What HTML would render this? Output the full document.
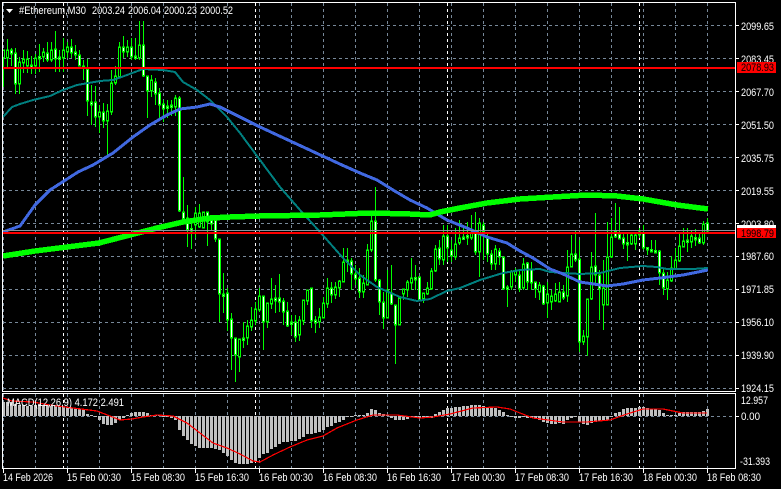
<!DOCTYPE html>
<html>
<head>
<meta charset="utf-8">
<style>
html,body{margin:0;padding:0;background:#000;width:781px;height:489px;overflow:hidden}
svg{display:block;position:absolute;left:0;top:0}
text{font-family:"Liberation Sans",sans-serif;font-size:10.6px;fill:#fff}
</style>
</head>
<body>
<svg width="781" height="489" viewBox="0 0 781 489" xmlns="http://www.w3.org/2000/svg">
<defs>
<path id="w" d="M11 51V53M15 54V83M31 66V66.5M39 57.5V58M47 54V59M55 50V58M59 58V58.5M71 48V52M75 53V54M79 56V65M83 67V67.5M87 70V100M91 103V104M95 103V116M103 113V120M123 48V51M131 48V56M135 57V57.5M143 46V75M147 77V90M155 83V93M159 94V104M163 105V108M167 107V107.5M171 106V106.5M179 99V210M183 213V218M187 219V229M191 229.5V230M207 213V221M211 221V223M215 221V238M219 240V293M223 295V295.5M227 294V319M231 320V337M235 339V354M243 339V339.5M263 297V321M275 299V300M279 299V301M283 302V311M287 312V325M291 323V323.5M295 323V336M311 289V320M315 321V322M331 289V294M347 261V261.5M351 262V273M355 275V278M359 279V291M375 222V279M379 281V301M383 303V317M391 294V303M395 306V324M415 278.5V279M419 278V299M439 249V258M447 237V247M451 251V255M463 238V238.5M467 236.5V237M475 233V251M483 226V231M487 239V253M491 255V263M499 252V256M503 258V288M507 288V288.5M519 276V288M527 264V281M531 270V282M535 283V288M543 287V303M563 293V297M575 255V259M579 260V341M595 267V274M599 276V288M615 232V236M619 235V238M623 239V243M627 243.5V244M639 233V234M643 234V247M647 248.5V249M651 250.5V251M655 251.5V252M659 252V272M663 274V287M687 241V241.5M695 238.5V239M699 239V242M707 224V230"/>
<path id="b" d="M3 51V57M7 51V57M19 63V83M23 60V62M27 60V65M35 59V65M43 53V56M51 51V59M63 51V57M67 48V51M99 113V116M107 112V120M111 84V111M115 77V82M119 48V76M127 48V51M139 46V57M151 81V90M175 99V106M195 214V224M199 214V226M203 213V227M239 340V356M247 327V337M251 321V326M255 310V320M259 297V309M267 304V321M271 300V303M299 321V334M303 301V320M307 291V300M319 318V321M323 304V317M327 289V303M335 288V294M339 282V287M343 263V281M363 284V291M367 251V284M371 222V249M387 291V317M399 299V324M403 290V293M407 283V289M411 279V282M423 294V298M427 289V293M431 272V288M435 250V270M443 237V259M455 245V256M459 239V242M471 234V237M479 224V251M495 250V263M511 272V286M515 272V274M523 265V287M539 286V291M547 295V302M551 297V301M555 295V300M559 293V301M567 268V295M571 255V266M583 337V341M587 300V336M591 268V298M603 289V304M607 258V304M611 238V256M631 236V243M635 236V243M667 281V288M671 269V280M675 261V268M679 247V260M683 242V246M691 237V241M703 225V242"/>
</defs>

<!-- grid -->
<g shape-rendering="crispEdges" fill="none" stroke-width="1">
<path stroke="#778899" stroke-dasharray="3 3" d="M3 25.5H735M3 58.5H735M3 91.5H735M3 124.5H735M3 157.5H735M3 190.5H735M3 223.5H735M3 256.5H735M3 289.5H735M3 322.5H735M3 355.5H735M3 388.5H735M3 416.5H735"/>
<path stroke="#778899" stroke-dasharray="3 3" d="M3.5 3V391M35.5 3V391M67.5 3V391M99.5 3V391M131.5 3V391M163.5 3V391M195.5 3V391M227.5 3V391M259.5 3V391M291.5 3V391M323.5 3V391M355.5 3V391M387.5 3V391M419.5 3V391M451.5 3V391M483.5 3V391M515.5 3V391M547.5 3V391M579.5 3V391M611.5 3V391M643.5 3V391M675.5 3V391M707.5 3V391M3.5 394V468M35.5 394V468M67.5 394V468M99.5 394V468M131.5 394V468M163.5 394V468M195.5 394V468M227.5 394V468M259.5 394V468M291.5 394V468M323.5 394V468M355.5 394V468M387.5 394V468M419.5 394V468M451.5 394V468M483.5 394V468M515.5 394V468M547.5 394V468M579.5 394V468M611.5 394V468M643.5 394V468M675.5 394V468M707.5 394V468"/>
<path stroke="#fff" stroke-dasharray="3 3" d="M63.5 3V391M255.5 3V391M447.5 3V391M639.5 3V391M63.5 394V468M255.5 394V468M447.5 394V468M639.5 394V468"/>
</g>

<!-- candles -->
<g transform="translate(.5,0)" shape-rendering="crispEdges" fill="none">
<path stroke="#00ff00" stroke-width="1" d="M3 50V87M7 39V67M11 48V66M15 48V94M19 57V94M23 50V73M27 51V73M31 56V74M35 54V74M39 44V72M43 48V62M47 42V62M51 42V62M55 31V72M59 50V72M63 38V72M67 42V58M71 39V58M75 45V60M79 50V66M83 60V80M87 59V116M91 85V125M95 86V127M99 105V133M103 103V128M107 104V155M111 70V115M115 66V85M119 42V78M123 36V58M127 40V57M131 38V60M135 38V60M139 21V60M143 21V77M147 76V118M151 75V97M155 78V105M159 88V119M163 100V122M167 100V118M171 100V116M175 95V116M179 96V212M183 177V219M187 205V247M191 220V249M195 207V238M199 204V228M203 212V228M207 212V246M211 218V230M215 215V242M219 239V322M223 273V313M227 288V331M231 313V370M235 338V382M239 339V372M243 322V348M247 320V345M251 307V331M255 302V325M259 288V312M263 296V350M267 303V328M271 278V309M275 285V313M279 274V312M283 298V325M287 302V327M291 315V335M295 315V342M299 316V341M303 300V325M307 290V305M311 288V328M315 316V333M319 308V328M323 297V317M327 278V308M331 282V303M335 282V299M339 280V297M343 248V282M347 248V272M351 258V290M355 265V285M359 268V298M363 275V298M367 244V285M371 215V252M375 187V282M379 279V315M383 292V329M387 270V318M391 265V305M395 305V364M399 298V325M403 290V300M407 280V297M411 258V290M415 265V290M419 276V300M423 293V303M427 282V295M431 268V290M435 245V272M439 240V265M443 225V265M447 225V262M451 240V262M455 228V260M459 220V245M463 225V240M467 222V245M471 215V240M475 212V255M479 218V277M483 222V260M487 232V262M491 250V270M495 245V270M499 248V265M503 257V290M507 285V307M511 270V290M515 268V282M519 270V292M523 258V290M527 262V290M531 262V290M535 282V298M539 282V300M543 285V305M547 282V318M551 290V310M555 283V302M559 282V302M563 285V300M567 250V302M571 235V267M575 230V262M579 240V352M583 330V345M587 299V356M591 252V300M595 213V283M599 270V320M603 260V330M607 222V305M611 218V258M615 203V238M619 207V239M623 232V249M627 232V261M631 232V245M635 232V250M639 228V238M643 225V250M647 248V255M651 240V252M655 240V252M659 250V285M663 268V295M667 272V300M671 256V282M675 248V270M679 232V262M683 228V247M687 228V252M691 231V248M695 229V246M699 233V244M703 221V245M707 218V232"/>
<use href="#w" stroke="#00ff00" stroke-width="3" stroke-linecap="square"/>
<use href="#b" stroke="#00ff00" stroke-width="3" stroke-linecap="square"/>
<use href="#w" stroke="#ffffff" stroke-width="1"/>
<use href="#b" stroke="#000000" stroke-width="1"/>
</g>

<!-- moving averages -->
<g fill="none" stroke-linejoin="round" shape-rendering="crispEdges">
<polyline stroke="#008080" stroke-width="2" points="3,117 12,107 20,104 33,100 50,96 63,90 77,85 100,81 113,80 127,75 143,69 163,70 175,72 183,82 197,90 210,100 227,117 240,133 260,160 280,187 300,210 320,232 343,258 360,275 377,287 400,297 417,301 430,299 447,291 460,288 480,280 503,273 520,270 540,269 550,272 580,274 600,273 620,268 643,266 657,267 667,269 693,269 708,268"/>
<polyline stroke="#4169e1" stroke-width="3" points="3,232 20,226 35,205 50,190 78,172 93,165 113,153 133,137 150,125 167,115 180,109 197,107 210,104 220,107 240,117 260,127 342,165 360,173 377,180 393,190 410,200 427,208 447,220 467,228 487,237 507,243 520,251 533,258 550,269 563,274 580,282 607,286 623,284 643,280 660,278 683,275 708,270"/>
<polyline stroke="#00ff00" stroke-width="5.5" points="3,256 35,251 67,247 99,243 130,235 157,228 183,222 210,218 230,217 260,216 320,215 370,213 410,214 430,215 440,212 460,208 487,203 520,199 553,197 587,195 617,196 643,199 677,205 708,209"/>
</g>

<!-- price lines -->
<g shape-rendering="crispEdges">
<rect x="3" y="230" width="732" height="1" fill="#8a939c"/>
<rect x="3" y="67" width="732" height="2" fill="#ff0000"/>
<rect x="3" y="232" width="732" height="2" fill="#ff0000"/>
</g>

<!-- MACD -->
<path transform="translate(.5,0)" shape-rendering="crispEdges" fill="none" stroke="#c0c0c0" stroke-width="3" d="M3 416V402M7 416V402M11 416V402M15 416V404M19 416V405M23 416V405M27 416V406M31 416V406M35 416V405M39 416V404M43 416V405M47 416V405M51 416V406M55 416V405M59 416V406M63 416V407M67 416V407M71 416V408M75 416V408M79 416V409M83 416V410M87 416V414M91 416V415M95 416V417M99 416V420M103 416V424M107 416V425M111 416V425M115 416V423M119 416V420M123 416V418M127 416V415M131 416V413M135 416V412M139 416V412M143 416V412M147 416V413M151 416V415M155 416V415M159 416V415M163 416V417M167 416V417M171 416V418M175 416V420M179 416V430M183 416V436M187 416V440M191 416V444M195 416V446M199 416V448M203 416V448M207 416V448M211 416V448M215 416V449M219 416V450M223 416V453M227 416V456M231 416V460M235 416V463M239 416V464M243 416V464M247 416V464M251 416V463M255 416V461M259 416V458M263 416V454M267 416V453M271 416V449M275 416V447M279 416V444M283 416V442M287 416V442M291 416V441M295 416V441M299 416V439M303 416V437M307 416V434M311 416V434M315 416V433M319 416V432M323 416V430M327 416V427M331 416V426M335 416V423M339 416V422M343 416V420M347 416V417M351 416V417M355 416V415M359 416V415M363 416V415M367 416V413M371 416V409M375 416V410M379 416V413M383 416V414M387 416V415M391 416V418M395 416V420M399 416V420M403 416V420M407 416V419M411 416V417M415 416V418M419 416V418M423 416V418M427 416V418M431 416V418M435 416V414M439 416V412M443 416V410M447 416V408M451 416V408M455 416V407M459 416V407M463 416V406M467 416V406M471 416V405M475 416V405M479 416V405M483 416V406M487 416V407M491 416V408M495 416V408M499 416V410M503 416V412M507 416V415M511 416V417M515 416V418M519 416V418M523 416V417M527 416V418M531 416V418M535 416V419M539 416V420M543 416V422M547 416V423M551 416V424M555 416V424M559 416V423M563 416V424M567 416V420M571 416V418M575 416V417M579 416V422M583 416V424M587 416V425M591 416V423M595 416V422M599 416V421M603 416V421M607 416V420M611 416V417M615 416V413M619 416V412M623 416V409M627 416V408M631 416V408M635 416V408M639 416V407M643 416V407M647 416V408M651 416V409M655 416V409M659 416V410M663 416V413M667 416V415M671 416V415M675 416V415M679 416V413M683 416V412M687 416V412M691 416V412M695 416V412M699 416V412M703 416V411M707 416V409"/>
<polyline fill="none" stroke="#ff0000" stroke-width="1.2" shape-rendering="crispEdges" points="3,398 12,401 33,402 50,405 73,408 97,411 110,416 120,420 132,419 143,417 157,415 173,416 187,423 200,433 213,443 227,448 240,454 253,461 260,462 273,455 290,447 307,440 323,436 337,428 357,420 373,415 397,415 420,418 433,417 450,414 473,408 497,407 510,409 520,413 533,418 563,422 587,422 610,420 627,414 643,409 663,409 683,413 707,413"/>

<!-- frames and ticks -->
<g shape-rendering="crispEdges" fill="none" stroke="#fff" stroke-width="1">
<path d="M2.5 2.5H735.5V391.5H2.5Z"/>
<path d="M2.5 393.5H735.5V468.5H2.5Z"/>
<path d="M735 25.5H739M735 58.5H739M735 91.5H739M735 124.5H739M735 157.5H739M735 190.5H739M735 223.5H739M735 256.5H739M735 289.5H739M735 322.5H739M735 355.5H739M735 388.5H739M735 416.5H739"/>
<path d="M3.5 469V473M67.5 469V473M131.5 469V473M195.5 469V473M259.5 469V473M323.5 469V473M387.5 469V473M451.5 469V473M515.5 469V473M579.5 469V473M643.5 469V473M707.5 469V473"/>
</g>

<!-- header -->
<polygon points="6,9 13,9 9.5,13" fill="#fff"/>
<text x="19" y="14" textLength="67" lengthAdjust="spacingAndGlyphs">#Ethereum,M30</text>
<text x="92" y="14" textLength="33" lengthAdjust="spacingAndGlyphs">2003.24</text>
<text x="128" y="14" textLength="33" lengthAdjust="spacingAndGlyphs">2006.04</text>
<text x="164" y="14" textLength="33" lengthAdjust="spacingAndGlyphs">2000.23</text>
<text x="200" y="14" textLength="33" lengthAdjust="spacingAndGlyphs">2000.52</text>
<text x="7" y="406" textLength="117" lengthAdjust="spacingAndGlyphs" fill="#e8e8e8">MACD(12,26,9) 4.172 2.491</text>

<!-- price axis -->
<g>
<text x="741" y="30" textLength="33" lengthAdjust="spacingAndGlyphs">2099.65</text>
<text x="741" y="63" textLength="33" lengthAdjust="spacingAndGlyphs">2083.45</text>
<text x="741" y="96" textLength="33" lengthAdjust="spacingAndGlyphs">2067.70</text>
<text x="741" y="129" textLength="33" lengthAdjust="spacingAndGlyphs">2051.50</text>
<text x="741" y="162" textLength="33" lengthAdjust="spacingAndGlyphs">2035.75</text>
<text x="741" y="195" textLength="33" lengthAdjust="spacingAndGlyphs">2019.55</text>
<text x="741" y="228" textLength="33" lengthAdjust="spacingAndGlyphs">2003.80</text>
<text x="741" y="260" textLength="33" lengthAdjust="spacingAndGlyphs">1987.60</text>
<text x="741" y="293" textLength="33" lengthAdjust="spacingAndGlyphs">1971.85</text>
<text x="741" y="326" textLength="33" lengthAdjust="spacingAndGlyphs">1956.10</text>
<text x="741" y="359" textLength="33" lengthAdjust="spacingAndGlyphs">1939.90</text>
<text x="741" y="392" textLength="33" lengthAdjust="spacingAndGlyphs">1924.15</text>
<text x="741" y="404" textLength="27" lengthAdjust="spacingAndGlyphs">12.957</text>
<text x="741" y="420" textLength="19" lengthAdjust="spacingAndGlyphs">0.00</text>
<text x="740" y="465" textLength="30" lengthAdjust="spacingAndGlyphs">-31.393</text>
</g>
<g shape-rendering="crispEdges">
<rect x="737" y="62" width="39" height="11" fill="#ff0000"/>
<rect x="737" y="225" width="39" height="3" fill="#ffffff"/>
<rect x="737" y="228" width="39" height="10" fill="#ff0000"/>
</g>
<text x="741" y="71" textLength="33" lengthAdjust="spacingAndGlyphs" style="fill:#000">2078.93</text>
<text x="741" y="237" textLength="33" lengthAdjust="spacingAndGlyphs" style="fill:#000">1998.79</text>

<!-- time axis -->
<g>
<text x="3" y="481" textLength="50" lengthAdjust="spacingAndGlyphs">14 Feb 2026</text>
<text x="67" y="481" textLength="54" lengthAdjust="spacingAndGlyphs">15 Feb 00:30</text>
<text x="131" y="481" textLength="54" lengthAdjust="spacingAndGlyphs">15 Feb 08:30</text>
<text x="195" y="481" textLength="54" lengthAdjust="spacingAndGlyphs">15 Feb 16:30</text>
<text x="259" y="481" textLength="54" lengthAdjust="spacingAndGlyphs">16 Feb 00:30</text>
<text x="323" y="481" textLength="54" lengthAdjust="spacingAndGlyphs">16 Feb 08:30</text>
<text x="387" y="481" textLength="54" lengthAdjust="spacingAndGlyphs">16 Feb 16:30</text>
<text x="451" y="481" textLength="54" lengthAdjust="spacingAndGlyphs">17 Feb 00:30</text>
<text x="515" y="481" textLength="54" lengthAdjust="spacingAndGlyphs">17 Feb 08:30</text>
<text x="579" y="481" textLength="54" lengthAdjust="spacingAndGlyphs">17 Feb 16:30</text>
<text x="643" y="481" textLength="54" lengthAdjust="spacingAndGlyphs">18 Feb 00:30</text>
<text x="707" y="481" textLength="54" lengthAdjust="spacingAndGlyphs">18 Feb 08:30</text>
</g>
</svg>
</body>
</html>
